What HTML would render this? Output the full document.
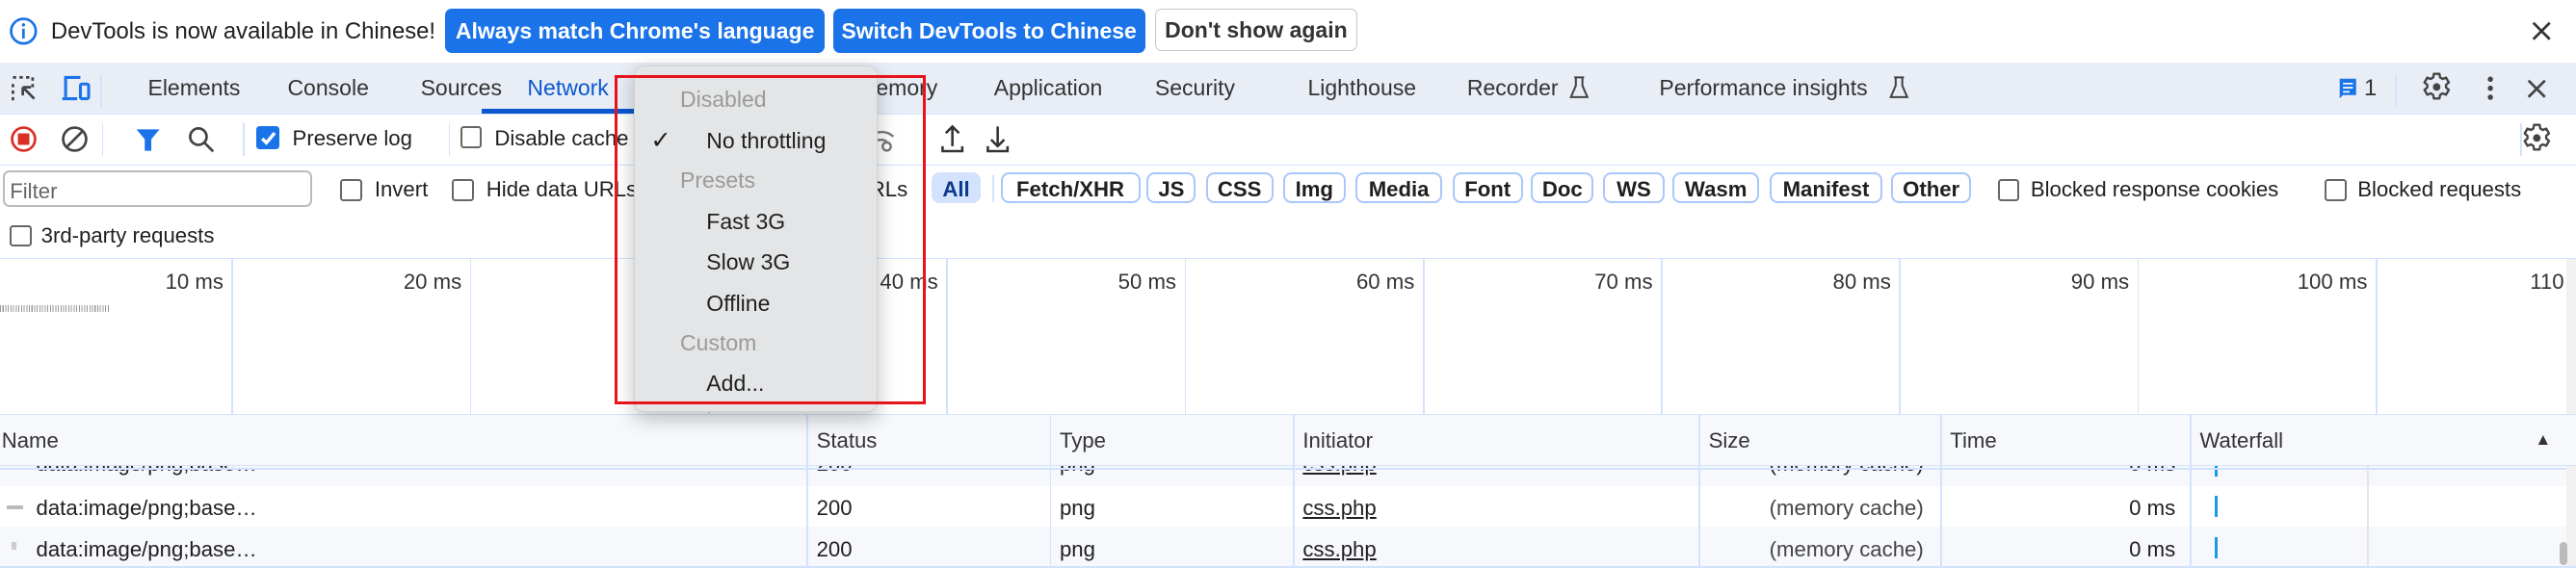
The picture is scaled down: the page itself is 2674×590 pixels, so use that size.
<!DOCTYPE html>
<html><head><meta charset="utf-8"><style>
html,body{margin:0;padding:0;width:2674px;height:590px;overflow:hidden;background:#fff}
#w{position:relative;width:1568px;height:346px;zoom:1.70536;font-family:"Liberation Sans",Arial,sans-serif;font-size:13px;color:#1f1f1f;overflow:hidden}
.a{position:absolute;white-space:nowrap}
.btn{position:absolute;top:5px;height:27px;line-height:27px;border-radius:4px;background:#1a73e8;color:#fff;font-weight:bold;font-size:13.5px;text-align:center}
.tab{position:absolute;top:46px;font-size:13.5px;color:#333}
.cb{position:absolute;width:11px;height:11px;border:1.3px solid #666;border-radius:2px;background:#fff}
.chip{position:absolute;top:105px;height:19px;line-height:19px;border:1.3px solid #a8c7fa;border-radius:5px;font-weight:bold;font-size:13px;text-align:center;box-sizing:border-box}
.vl{position:absolute;top:158px;height:94px;width:1px;background:#d3e3fd}
.tl{position:absolute;top:164px;font-size:13px;color:#333;text-align:right}
.col{position:absolute;top:252px;width:1px;height:94px;background:#d3e3fd}
.hd{position:absolute;top:261px;font-size:13px;color:#333}
.sep{position:absolute;width:1px;background:#d3e3fd}
.mi{position:absolute;left:430px;font-size:13.5px;color:#1f1f1f}
.mg{position:absolute;left:414px;font-size:13.5px;color:#9a9a9a}
</style></head><body><div id="w">
<svg width="0" height="0" style="position:absolute"><defs><g id="gear"><path d="M7.3 1h3.4l.4 2.2 1.5.9 2.1-.8 1.7 2.9-1.7 1.5v1.6l1.7 1.5-1.7 2.9-2.1-.8-1.5.9-.4 2.2H7.3l-.4-2.2-1.5-.9-2.1.8-1.7-2.9 1.7-1.5V7.7L1.6 6.2l1.7-2.9 2.1.8 1.5-.9z" fill="none" stroke="#444" stroke-width="1.4" stroke-linejoin="round"/><circle cx="9" cy="9" r="2.3" fill="#444"/></g></defs></svg>
<!-- info bar -->
<svg class="a" style="left:5px;top:10px" width="18" height="18"><circle cx="9" cy="9" r="7.5" fill="none" stroke="#1a73e8" stroke-width="1.6"/><rect x="8.2" y="7.5" width="1.6" height="6" fill="#1a73e8"/><circle cx="9" cy="5.2" r="1" fill="#1a73e8"/></svg>
<div class="a" style="left:31px;top:11px;font-size:14px">DevTools is now available in Chinese!</div>
<div class="btn" style="left:271px;width:231px">Always match Chrome's language</div>
<div class="btn" style="left:507px;width:190px">Switch DevTools to Chinese</div>
<div class="btn" style="left:703px;width:122px;background:#fff;color:#333;border:1px solid #c7c7c7;height:25px;line-height:25px">Don't show again</div>
<svg class="a" style="left:1541px;top:13px" width="12" height="12"><path d="M1 1l10 10M11 1L1 11" stroke="#333" stroke-width="1.6"/></svg>
<!-- tab bar -->
<div class="a" style="left:0;top:38px;width:1568px;height:31px;background:#e9eef6;border-bottom:1px solid #d3e3fd"></div>
<svg class="a" style="left:6px;top:45px" width="18" height="18"><path d="M2 2h2M6 2h2M10 2h2M2 6v2M2 10v2M2 14v2M14 2v2M14 6v2" stroke="#444" stroke-width="1.6"/><path d="M15 15L8 8M8 8h5M8 8v5" stroke="#444" stroke-width="1.6" fill="none"/></svg>
<svg class="a" style="left:37px;top:45px" width="20" height="18"><path d="M3 14V2h9M1 15h9" stroke="#1a73e8" stroke-width="1.8" fill="none"/><rect x="12" y="6" width="5" height="9" rx="1" fill="none" stroke="#1a73e8" stroke-width="1.8"/></svg>
<div class="sep" style="left:61px;top:45px;height:20px"></div>
<div class="tab" style="left:90px">Elements</div>
<div class="tab" style="left:175px">Console</div>
<div class="tab" style="left:256px">Sources</div>
<div class="tab" style="left:321px;color:#0b57d0">Network</div>
<div class="a" style="left:293px;top:66px;width:100px;height:3px;background:#0b57d0"></div>
<div class="tab" style="left:522px">Memory</div>
<div class="tab" style="left:605px">Application</div>
<div class="tab" style="left:703px">Security</div>
<div class="tab" style="left:796px">Lighthouse</div>
<div class="tab" style="left:893px">Recorder</div>
<svg class="a" style="left:955px;top:45px" width="12" height="16"><path d="M4 2v5L1 14h10L8 7V2M3 2h6" stroke="#444" stroke-width="1.2" fill="none"/></svg>
<div class="tab" style="left:1010px">Performance insights</div>
<svg class="a" style="left:1150px;top:45px" width="12" height="16"><path d="M4 2v5L1 14h10L8 7V2M3 2h6" stroke="#444" stroke-width="1.2" fill="none"/></svg>
<svg class="a" style="left:1423px;top:47px" width="12" height="14"><path d="M1 1h10v10H3l-2 2z" fill="#1a73e8"/><path d="M3 4h6M3 6.5h6M3 9h4" stroke="#fff" stroke-width="1"/></svg>
<div class="tab" style="left:1439px;font-size:14px">1</div>
<div class="sep" style="left:1458px;top:45px;height:20px"></div>
<svg class="a" style="left:1474px;top:44px" width="18" height="18"><use href="#gear"/></svg>
<svg class="a" style="left:1513px;top:46px" width="6" height="16"><circle cx="3" cy="2.5" r="1.6" fill="#444"/><circle cx="3" cy="8" r="1.6" fill="#444"/><circle cx="3" cy="13.5" r="1.6" fill="#444"/></svg>
<svg class="a" style="left:1538px;top:48px" width="12" height="12"><path d="M1 1l10 10M11 1L1 11" stroke="#444" stroke-width="1.6"/></svg>
<!-- toolbar -->
<div class="a" style="left:0;top:100px;width:1568px;height:1px;background:#d3e3fd"></div>
<svg class="a" style="left:6px;top:76px" width="17" height="17"><circle cx="8.5" cy="8.5" r="7" fill="none" stroke="#d93025" stroke-width="1.6"/><rect x="5" y="5" width="7" height="7" fill="#d93025"/></svg>
<svg class="a" style="left:37px;top:76px" width="17" height="17"><circle cx="8.5" cy="8.5" r="7" fill="none" stroke="#444" stroke-width="1.6"/><path d="M3.5 13.5L13.5 3.5" stroke="#444" stroke-width="1.6"/></svg>
<div class="sep" style="left:62px;top:75px;height:20px"></div>
<svg class="a" style="left:82px;top:77px" width="16" height="16"><path d="M1 2h14L10 8v7H6V8z" fill="#1a73e8"/></svg>
<svg class="a" style="left:114px;top:76px" width="18" height="18"><circle cx="7" cy="7" r="5" fill="none" stroke="#444" stroke-width="1.6"/><path d="M10.5 10.5L16 16" stroke="#444" stroke-width="1.6"/></svg>
<div class="sep" style="left:148px;top:75px;height:20px"></div>
<div class="a" style="left:156px;top:77px;width:14px;height:14px;background:#1a73e8;border-radius:2px"></div>
<svg class="a" style="left:157px;top:78px" width="12" height="12"><path d="M2.5 6.5l2.5 2.5 5-6" stroke="#fff" stroke-width="2" fill="none"/></svg>
<div class="a" style="left:178px;top:77px">Preserve log</div>
<div class="sep" style="left:273px;top:75px;height:20px"></div>
<div class="cb" style="left:280px;top:77px"></div>
<div class="a" style="left:301px;top:77px">Disable cache</div>
<svg class="a" style="left:528px;top:76px" width="18" height="18"><path d="M2 7a10 10 0 0 1 14 0M5 10a6 6 0 0 1 7 0" stroke="#777" stroke-width="1.4" fill="none"/><circle cx="12" cy="13" r="2.5" fill="none" stroke="#777" stroke-width="1.4"/></svg>
<div class="sep" style="left:562px;top:75px;height:20px"></div>
<svg class="a" style="left:572px;top:75px" width="16" height="19"><path d="M8 14V2M4 6l4-4 4 4M2 14v3h12v-3" stroke="#333" stroke-width="1.5" fill="none"/></svg>
<svg class="a" style="left:599px;top:75px" width="16" height="19"><path d="M8 2v12M4 10l4 4 4-4M2 14v3h12v-3" stroke="#333" stroke-width="1.5" fill="none"/></svg>
<div class="sep" style="left:1534px;top:75px;height:20px"></div>
<svg class="a" style="left:1535px;top:75px" width="18" height="18"><use href="#gear"/></svg>
<!-- filter row -->
<div class="a" style="left:2px;top:104px;width:188px;height:22px;border:1.3px solid #bbb;border-radius:4px;box-sizing:border-box"></div>
<div class="a" style="left:6px;top:109px;color:#666">Filter</div>
<div class="cb" style="left:207px;top:109px"></div><div class="a" style="left:228px;top:108px">Invert</div>
<div class="cb" style="left:275px;top:109px"></div><div class="a" style="left:296px;top:108px">Hide data URLs</div>
<div class="a" style="left:520px;top:108px">URLs</div>
<div class="chip" style="left:567px;width:30px;background:#d3e3fd;border-color:#d3e3fd;color:#0b3a8a">All</div>
<div class="sep" style="left:604px;top:107px;height:16px"></div>
<div class="chip" style="left:609px;width:85px">Fetch/XHR</div>
<div class="chip" style="left:698px;width:30px">JS</div>
<div class="chip" style="left:734px;width:41px">CSS</div>
<div class="chip" style="left:781px;width:38px">Img</div>
<div class="chip" style="left:825px;width:53px">Media</div>
<div class="chip" style="left:884px;width:43px">Font</div>
<div class="chip" style="left:932px;width:38px">Doc</div>
<div class="chip" style="left:976px;width:37px">WS</div>
<div class="chip" style="left:1018px;width:53px">Wasm</div>
<div class="chip" style="left:1077px;width:69px">Manifest</div>
<div class="chip" style="left:1151px;width:49px">Other</div>
<div class="cb" style="left:1216px;top:109px"></div><div class="a" style="left:1236px;top:108px">Blocked response cookies</div>
<div class="cb" style="left:1415px;top:109px"></div><div class="a" style="left:1435px;top:108px">Blocked requests</div>
<div class="cb" style="left:6px;top:137px"></div><div class="a" style="left:25px;top:136px">3rd-party requests</div>
<div class="a" style="left:0;top:157px;width:1568px;height:1px;background:#d3e3fd"></div>
<!-- timeline -->
<div class="vl" style="left:141px"></div><div class="vl" style="left:286px"></div><div class="vl" style="left:431px"></div><div class="vl" style="left:576px"></div><div class="vl" style="left:721px"></div><div class="vl" style="left:866px"></div><div class="vl" style="left:1011px"></div><div class="vl" style="left:1156px"></div><div class="vl" style="left:1301px"></div><div class="vl" style="left:1446px"></div>
<div class="tl" style="left:60px;width:76px">10 ms</div><div class="tl" style="left:205px;width:76px">20 ms</div><div class="tl" style="left:495px;width:76px">40 ms</div><div class="tl" style="left:640px;width:76px">50 ms</div><div class="tl" style="left:785px;width:76px">60 ms</div><div class="tl" style="left:930px;width:76px">70 ms</div><div class="tl" style="left:1075px;width:76px">80 ms</div><div class="tl" style="left:1220px;width:76px">90 ms</div><div class="tl" style="left:1365px;width:76px">100 ms</div><div class="a tl" style="left:1540px">110</div>
<div class="a" style="left:0;top:186px;width:66px;height:4px;background:repeating-linear-gradient(90deg,#999 0 0.6px,transparent 0.6px 1.6px)"></div>
<div class="a" style="left:1562px;top:158px;width:6px;height:188px;background:#f1f1f1"></div>
<!-- table -->
<div class="a" style="left:0;top:252px;width:1568px;height:32px;background:#f6f8fc;border-top:1px solid #d3e3fd;border-bottom:1px solid #d3e3fd;box-sizing:border-box"></div>
<div class="a" style="left:0;top:284px;width:1562px;height:12px;background:#f6f8fc"></div>
<div class="a" style="left:0;top:321px;width:1562px;height:25px;background:#f6f8fc"></div>
<div class="col" style="left:491px"></div><div class="col" style="left:639px"></div><div class="col" style="left:787px"></div><div class="col" style="left:1034px"></div><div class="col" style="left:1181px"></div><div class="col" style="left:1333px"></div>
<div class="a" style="left:1441px;top:284px;width:1px;height:62px;background:#e5e5e5"></div>
<div class="hd" style="left:1px">Name</div><div class="hd" style="left:497px">Status</div><div class="hd" style="left:645px">Type</div><div class="hd" style="left:793px">Initiator</div><div class="hd" style="left:1040px">Size</div><div class="hd" style="left:1187px">Time</div><div class="hd" style="left:1339px">Waterfall</div>
<div class="a" style="left:1543px;top:262px;font-size:10px;color:#333">▲</div>
<div class="a" style="left:0;top:284px;width:1568px;height:12px;overflow:hidden">
 <div class="a" style="left:22px;top:-9px">data:image/png;base…</div><div class="a" style="left:497px;top:-9px">200</div><div class="a" style="left:645px;top:-9px">png</div><div class="a" style="left:793px;top:-9px;text-decoration:underline">css.php</div><div class="a" style="left:1077px;top:-9px">(memory cache)</div><div class="a" style="left:1296px;top:-9px">0 ms</div><div class="a" style="left:1348px;top:0;width:2px;height:6px;background:#1a9be8"></div>
</div>
<div class="a" style="left:0;top:285px;width:1562px;height:1px;background:#d3e3fd"></div>
<div class="a" style="left:4px;top:308px;width:10px;height:2px;background:#bbb"></div>
<div class="a" style="left:22px;top:302px">data:image/png;base…</div><div class="a" style="left:497px;top:302px">200</div><div class="a" style="left:645px;top:302px">png</div><div class="a" style="left:793px;top:302px;text-decoration:underline">css.php</div><div class="a" style="left:1077px;top:302px;color:#444">(memory cache)</div><div class="a" style="left:1296px;top:302px">0 ms</div>
<div class="a" style="left:1348px;top:302px;width:2px;height:13px;background:#1a9be8"></div>
<div class="a" style="left:7px;top:330px;width:3px;height:5px;background:#ccc"></div>
<div class="a" style="left:22px;top:327px">data:image/png;base…</div><div class="a" style="left:497px;top:327px">200</div><div class="a" style="left:645px;top:327px">png</div><div class="a" style="left:793px;top:327px;text-decoration:underline">css.php</div><div class="a" style="left:1077px;top:327px;color:#444">(memory cache)</div><div class="a" style="left:1296px;top:327px">0 ms</div>
<div class="a" style="left:1348px;top:327px;width:2px;height:13px;background:#1a9be8"></div>
<div class="a" style="left:0;top:345px;width:1568px;height:1px;background:#d3e3fd"></div>
<div class="a" style="left:1558px;top:330px;width:5px;height:14px;border-radius:3px;background:#bbb"></div>
<!-- dropdown -->
<div class="a" style="left:386px;top:40px;width:147px;height:210px;background:#e3e5e7;border:1px solid #cfd1d3;border-radius:6px;box-shadow:0 4px 12px rgba(0,0,0,.25)"></div>
<div class="mg" style="top:53px">Disabled</div>
<div class="a" style="left:396px;top:77px;font-size:15px">✓</div>
<div class="mi" style="top:78px">No throttling</div>
<div class="mg" style="top:102px">Presets</div>
<div class="mi" style="top:127px">Fast 3G</div>
<div class="mi" style="top:152px">Slow 3G</div>
<div class="mi" style="top:177px">Offline</div>
<div class="mg" style="top:201px">Custom</div>
<div class="mi" style="top:226px">Add...</div>
<div class="a" style="left:374px;top:46px;width:186px;height:197px;border:2px solid #e8141c"></div>
</div></body></html>
